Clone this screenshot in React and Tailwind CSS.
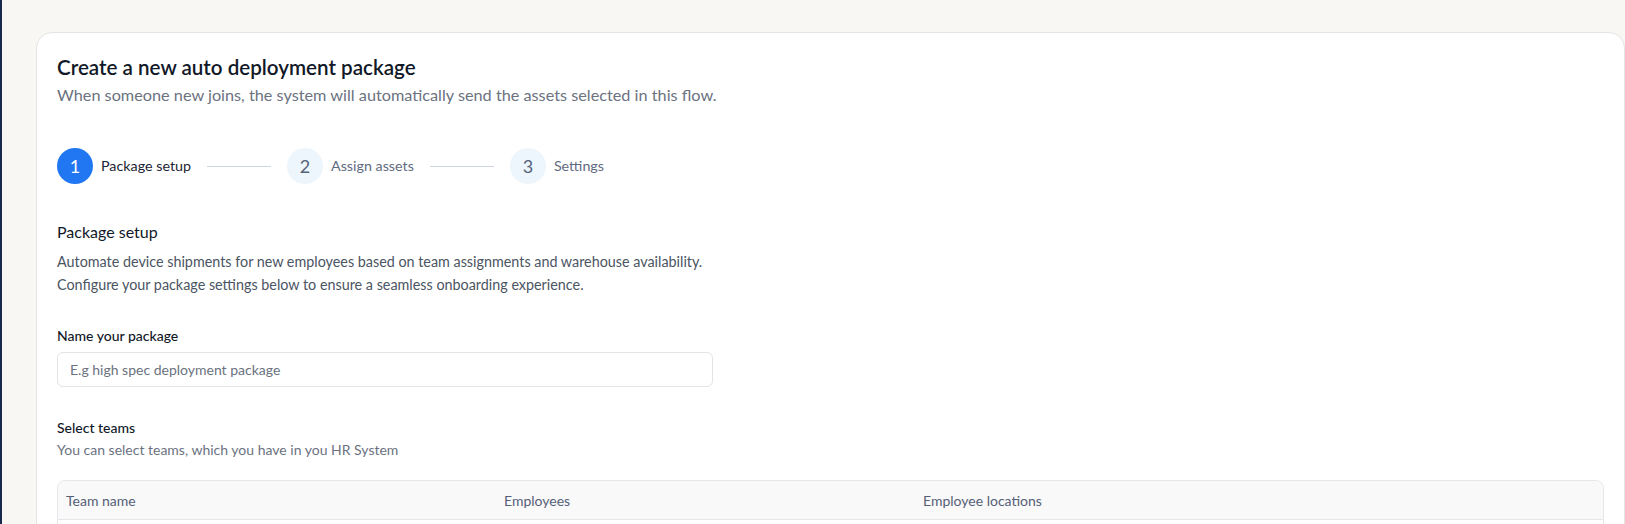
import { useState } from "react";

const steps = [
  { id: 1, label: "Package setup" },
  { id: 2, label: "Assign assets" },
  { id: 3, label: "Settings" },
];

const Stepper = ({ current }) => (
  <div className="flex items-center">
    {steps.map((step, index) => (
      <div key={step.id} className="flex items-center">
        <div
          className={`flex h-9 w-9 items-center justify-center rounded-full text-[18px] ${
            step.id === current
              ? "bg-[#2177f2] text-white"
              : "bg-[#edf6fd] text-[#56627a]"
          }`}
        >
          {step.id}
        </div>
        <span
          className={`ml-2 text-[14.3px] ${
            step.id === current ? "text-[#1d2433]" : "text-[#5f6b80]"
          }`}
        >
          {step.label}
        </span>
        {index < steps.length - 1 && (
          <div className="mx-4 h-px w-16 bg-[#cfd5dd]" />
        )}
      </div>
    ))}
  </div>
);

const App = () => {
  const [name, setName] = useState("");

  return (
    <div className="flex min-h-screen bg-[#f8f7f4] font-['Lato',sans-serif]">
      <div className="w-[2px] shrink-0 bg-[#1a2a4d]" />
      <div className="flex-1 pl-[34px] pt-8">
        <div className="rounded-tl-2xl rounded-tr-2xl border border-[#e4e4e2] bg-white px-5 pt-5">
          <h1 className="text-[20.6px] font-semibold leading-7 text-[#111827]">
            Create a new auto deployment package
          </h1>
          <p className="mt-0.5 text-[16.25px] leading-6 text-[#6b7280]">
            When someone new joins, the system will automatically send the
            assets selected in this flow.
          </p>

          <div className="mt-[41px]">
            <Stepper current={1} />
          </div>

          <h2 className="mt-9 text-[16px] leading-6 text-[#111827]">
            Package setup
          </h2>
          <div className="mt-1.5 text-[14.35px] leading-[23px] text-[#4b5563]">
            <p>
              Automate device shipments for new employees based on team
              assignments and warehouse availability.
            </p>
            <p>
              Configure your package settings below to ensure a seamless
              onboarding experience.
            </p>
          </div>

          <label className="mt-[30px] block text-[14px] font-medium leading-5 text-[#111827]">
            Name your package
          </label>
          <input
            type="text"
            value={name}
            onChange={(e) => setName(e.target.value)}
            placeholder="E.g high spec deployment package"
            className="mt-1.5 h-[35px] w-[656px] rounded-md border border-[#e2e4e8] px-3 text-[14px] text-[#111827] placeholder:text-[#6b7280] focus:outline-none"
          />

          <h3 className="mt-[31px] text-[14px] font-medium leading-5 text-[#111827]">
            Select teams
          </h3>
          <p className="mt-0.5 text-[14px] leading-5 text-[#6b7280]">
            You can select teams, which you have in you HR System
          </p>

          <div className="mt-5 overflow-hidden rounded-t-lg border border-[#e5e7eb]">
            <div className="grid h-[39px] grid-cols-[438px_419px_1fr] items-center border-b border-[#e5e7eb] bg-[#f9f9f9] text-[14px] text-[#556077]">
              <div className="px-2">Team name</div>
              <div className="px-2">Employees</div>
              <div className="px-2">Employee locations</div>
            </div>
            <div className="h-10" />
          </div>
        </div>
      </div>
    </div>
  );
};

export default App;
